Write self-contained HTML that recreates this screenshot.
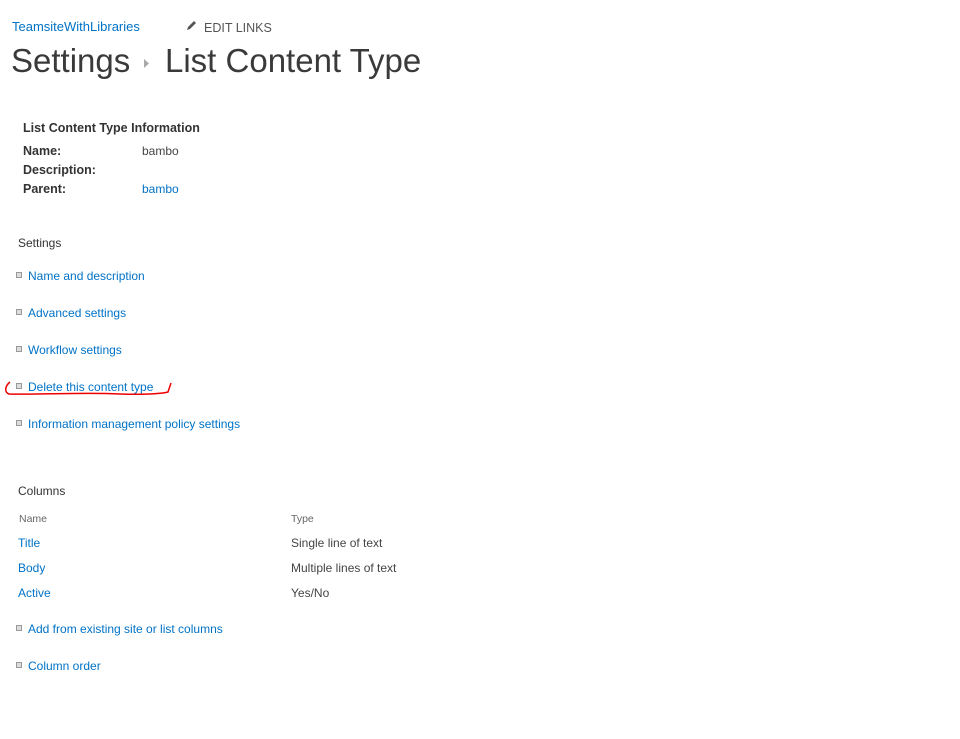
<!DOCTYPE html>
<html><head><meta charset="utf-8"><style>
body{margin:0;width:960px;height:739px;background:#fff;font-family:"Liberation Sans",sans-serif;color:#444;position:relative;overflow:hidden}
.a{position:absolute;white-space:nowrap}
.l{color:#0072c6}
.b{font-weight:bold;color:#333;font-size:12.5px}
.s{font-size:12px}
.bul{position:absolute;width:4px;height:4px;border:1px solid #999;background:#ddd}
</style></head><body>
<div class="a l" style="left:12px;top:19px;font-size:13px">TeamsiteWithLibraries</div>
<svg class="a" style="left:185px;top:20px" width="12" height="12" viewBox="0 0 12 12"><path d="M2 10 L3 7 L9 1 L11 3 L5 9 Z" fill="#555"/></svg>
<div class="a" style="left:204px;top:21px;font-size:12.5px;color:#555">EDIT LINKS</div>
<div class="a" style="left:11px;top:42px;font-size:33px;color:#3a3a3a">Settings</div>
<svg class="a" style="left:144px;top:59px" width="6" height="9"><path d="M0 0 L5 4.5 L0 9Z" fill="#aaa"/></svg>
<div class="a" style="left:165px;top:42px;font-size:33px;color:#3a3a3a">List Content Type</div>
<div class="a b" style="left:23px;top:121px">List Content Type Information</div>
<div class="a b" style="left:23px;top:144px">Name:</div>
<div class="a s" style="left:142px;top:144px;color:#444">bambo</div>
<div class="a b" style="left:23px;top:163px">Description:</div>
<div class="a b" style="left:23px;top:182px">Parent:</div>
<div class="a s l" style="left:142px;top:182px">bambo</div>
<div class="a s" style="left:18px;top:236px;color:#333">Settings</div>
<div class="bul" style="left:16px;top:272px"></div><div class="a s l" style="left:28px;top:269px">Name and description</div>
<div class="bul" style="left:16px;top:309px"></div><div class="a s l" style="left:28px;top:306px">Advanced settings</div>
<div class="bul" style="left:16px;top:346px"></div><div class="a s l" style="left:28px;top:343px">Workflow settings</div>
<div class="bul" style="left:16px;top:383px"></div><div class="a s l" style="left:28px;top:380px">Delete this content type</div>
<svg class="a" style="left:0;top:378px" width="180" height="22"><path d="M10 4 C5 8 4 14 9 16 C40 17 80 14 120 16 C150 17 165 15 168 14 L171 5" stroke="#e00" stroke-width="1.5" fill="none"/></svg>
<div class="bul" style="left:16px;top:420px"></div><div class="a s l" style="left:28px;top:417px">Information management policy settings</div>
<div class="a s" style="left:18px;top:484px;color:#333">Columns</div>
<div class="a" style="left:19px;top:513px;font-size:10.5px;color:#666">Name</div>
<div class="a" style="left:291px;top:513px;font-size:10.5px;color:#666">Type</div>
<div class="a s l" style="left:18px;top:536px">Title</div><div class="a s" style="left:291px;top:536px">Single line of text</div>
<div class="a s l" style="left:18px;top:561px">Body</div><div class="a s" style="left:291px;top:561px">Multiple lines of text</div>
<div class="a s l" style="left:18px;top:586px">Active</div><div class="a s" style="left:291px;top:586px">Yes/No</div>
<div class="bul" style="left:16px;top:625px"></div><div class="a s l" style="left:28px;top:622px">Add from existing site or list columns</div>
<div class="bul" style="left:16px;top:662px"></div><div class="a s l" style="left:28px;top:659px">Column order</div>
</body></html>
